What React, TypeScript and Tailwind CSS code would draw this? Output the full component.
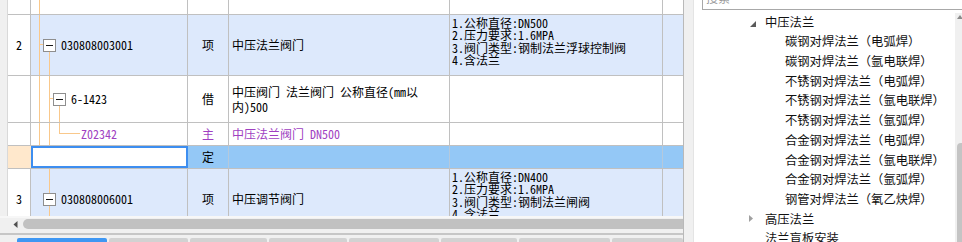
import React from "react";

function MinusBox() {
  return (
    <span className="relative z-10 flex h-[13px] w-[13px] shrink-0 items-center justify-center border border-[#8e8e8e] bg-white">
      <span className="h-px w-[7px] bg-[#1a1a1a]" />
    </span>
  );
}

export default function App() {
  return (
    <div className="flex h-[242px] w-[962px] overflow-hidden bg-white font-['Noto_Sans_CJK_SC',sans-serif] text-[12px] leading-none text-black">
      {/* LEFT: grid */}
      <div className="flex w-[683px] shrink-0 flex-col bg-[#f0f0f0]">
        <div className="flex h-[216px] overflow-hidden [font-feature-settings:'hwid']">
          <div className="w-[8px] shrink-0 border-r border-[#d9d9d9] bg-[#f0f0f0]" />
          <div className="flex w-[675px] flex-col bg-white">
            {/* row 0 (tail of previous) */}
            <div className="flex h-[15px] shrink-0 border-b border-[#c0c0c0]">
              <div className="w-[23px] border-r border-[#c0c0c0]" />
              <div className="relative w-[157px] border-r border-[#c0c0c0]">
                <span className="absolute bottom-0 left-[8px] top-0 w-px bg-[#f9c88b]" />
              </div>
              <div className="w-[41px] border-r border-[#c0c0c0]" />
              <div className="w-[221px] border-r border-[#c0c0c0]" />
              <div className="w-[213px] border-r border-[#c0c0c0]" />
              <div className="w-[20px]" />
            </div>

            {/* row 2 */}
            <div className="flex h-[61px] shrink-0 border-b border-[#c0c0c0] bg-[#dde9fc]">
              <div className="flex w-[23px] items-center justify-center border-r border-[#c0c0c0] bg-white">2</div>
              <div className="relative flex w-[157px] items-center gap-[5px] border-r border-[#c0c0c0] pl-[12px]">
                <span className="absolute bottom-0 left-[8px] top-0 w-px bg-[#f9c88b]" />
                <span className="absolute left-[8px] top-[29px] h-px w-[4px] bg-[#f9c88b]" />
                <span className="absolute bottom-0 left-[18px] top-[37px] w-px bg-[#f9c88b]" />
                <MinusBox />
                <span>030808003001</span>
              </div>
              <div className="flex w-[41px] items-center justify-center border-r border-[#c0c0c0]">项</div>
              <div className="flex w-[221px] items-center border-r border-[#c0c0c0] pl-[3px]">中压法兰阀门</div>
              <div className="w-[213px] border-r border-[#c0c0c0] pl-[2px] pt-[2px] leading-[12.3px]">
                <div>1.公称直径:DN500</div>
                <div>2.压力要求:1.6MPA</div>
                <div>3.阀门类型:钢制法兰浮球控制阀</div>
                <div>4.含法兰</div>
              </div>
              <div className="w-[20px]" />
            </div>

            {/* row 6-1423 */}
            <div className="flex h-[47px] shrink-0 border-b border-[#c0c0c0]">
              <div className="w-[23px] border-r border-[#c0c0c0]" />
              <div className="relative flex w-[157px] items-center gap-[5px] border-r border-[#c0c0c0] pl-[22px]">
                <span className="absolute bottom-0 left-[8px] top-0 w-px bg-[#f9c88b]" />
                <span className="absolute bottom-0 left-[18px] top-0 w-px bg-[#f9c88b]" />
                <span className="absolute left-[18px] top-[22px] h-px w-[4px] bg-[#f9c88b]" />
                <span className="absolute bottom-0 left-[28px] top-[29px] w-px bg-[#f9c88b]" />
                <MinusBox />
                <span>6-1423</span>
              </div>
              <div className="flex w-[41px] items-center justify-center border-r border-[#c0c0c0]">借</div>
              <div className="flex w-[221px] items-center border-r border-[#c0c0c0] pl-[3px] leading-[15px]">
                <div>
                  中压阀门 法兰阀门 公称直径(mm以
                  <br />
                  内)500
                </div>
              </div>
              <div className="w-[213px] border-r border-[#c0c0c0]" />
              <div className="w-[20px]" />
            </div>

            {/* row Z02342 */}
            <div className="flex h-[23px] shrink-0 border-b border-[#c0c0c0] text-[#a03fc2]">
              <div className="w-[23px] border-r border-[#c0c0c0]" />
              <div className="relative flex w-[157px] items-center border-r border-[#c0c0c0] pl-[50px]">
                <span className="absolute bottom-0 left-[8px] top-0 w-px bg-[#f9c88b]" />
                <span className="absolute bottom-0 left-[18px] top-0 w-px bg-[#f9c88b]" />
                <span className="absolute left-[28px] top-0 h-[11px] w-px bg-[#f9c88b]" />
                <span className="absolute left-[28px] top-[10px] h-px w-[21px] bg-[#f9c88b]" />
                <span>Z02342</span>
              </div>
              <div className="flex w-[41px] items-center justify-center border-r border-[#c0c0c0]">主</div>
              <div className="flex w-[221px] items-center border-r border-[#c0c0c0] pl-[3px]">中压法兰阀门 DN500</div>
              <div className="w-[213px] border-r border-[#c0c0c0]" />
              <div className="w-[20px]" />
            </div>

            {/* row 定 (editing) */}
            <div className="flex h-[23px] shrink-0 border-b border-[#c0c0c0] bg-[#94c8f6]">
              <div className="w-[23px] bg-[#ffe8cc]" />
              <div className="w-[157px] border-2 border-[#3d8ef0] bg-white" />
              <div className="flex w-[41px] items-center justify-center border-r border-[#b5c9dc]">定</div>
              <div className="w-[221px] border-r border-[#b5c9dc]" />
              <div className="w-[213px] border-r border-[#b5c9dc]" />
              <div className="w-[20px]" />
            </div>

            {/* row 3 */}
            <div className="flex h-[61px] shrink-0 border-b border-[#c0c0c0] bg-[#dde9fc]">
              <div className="flex w-[23px] items-center justify-center border-r border-[#c0c0c0] bg-white">3</div>
              <div className="relative flex w-[157px] items-center gap-[5px] border-r border-[#c0c0c0] pl-[12px]">
                <span className="absolute left-[18px] top-0 h-[24px] w-px bg-[#f9c88b]" />
                <span className="absolute bottom-0 left-[18px] top-[37px] w-px bg-[#f9c88b]" />
                <MinusBox />
                <span>030808006001</span>
              </div>
              <div className="flex w-[41px] items-center justify-center border-r border-[#c0c0c0]">项</div>
              <div className="flex w-[221px] items-center border-r border-[#c0c0c0] pl-[3px]">中压调节阀门</div>
              <div className="w-[213px] border-r border-[#c0c0c0] pl-[2px] pt-[2px] leading-[12.3px]">
                <div>1.公称直径:DN400</div>
                <div>2.压力要求:1.6MPA</div>
                <div>3.阀门类型:钢制法兰闸阀</div>
                <div>4.含法兰</div>
              </div>
              <div className="w-[20px]" />
            </div>
          </div>
        </div>

        {/* bottom: scrollbar + tabs */}
        <div className="h-[2px] shrink-0 bg-[#f7f7f7]" />
        <div className="flex h-[12px] shrink-0 items-center bg-[#f0f0f0] pl-[13px]">
          <svg width="5" height="7" viewBox="0 0 5 7" className="shrink-0">
            <polygon points="4.5,0 0.5,3.5 4.5,7" fill="#505050" />
          </svg>
          <div className="ml-[5px] h-[10px] flex-1 rounded-l-full bg-[#c1c1c1]" />
        </div>
        <div className="h-[3px] shrink-0 bg-[#f0f0f0]" />
        <div className="h-[2px] shrink-0 bg-[#c6c6c6]" />
        <div className="h-[3px] shrink-0 bg-[#f0f0f0]" />
        <div className="flex h-[4px] shrink-0 gap-[2px] bg-[#f0f0f0] pl-[17px]">
          <div className="w-[90px] rounded-t-[2px] bg-[#3f97f3]" />
          <div className="w-[79px] rounded-t-[2px] bg-[#d2d2d2]" />
          <div className="w-[77px] rounded-t-[2px] bg-[#d2d2d2]" />
          <div className="w-[78px] rounded-t-[2px] bg-[#d2d2d2]" />
          <div className="w-[90px] rounded-t-[2px] bg-[#d2d2d2]" />
          <div className="w-[76px] rounded-t-[2px] bg-[#d2d2d2]" />
          <div className="w-[91px] rounded-t-[2px] bg-[#d2d2d2]" />
          <div className="flex-1 rounded-t-[2px] bg-[#d2d2d2]" />
        </div>
      </div>

      {/* splitter */}
      <div className="w-[11px] shrink-0 border-l border-r border-l-[#b9b9b9] border-r-[#e4e4e4] bg-[#f0f0f0]" />

      {/* RIGHT: tree panel */}
      <div className="flex min-w-0 flex-1 flex-col overflow-hidden bg-white">
        <div className="ml-[8px] mt-[-15px] flex h-[25px] w-[300px] shrink-0 items-center border border-[#a8a8a8] pl-[3px] text-[#9a9a9a]">
          搜索
        </div>
        <div className="mt-[2px] flex min-h-0 flex-1">
          <div className="flex flex-1 flex-col text-[12.3px] leading-none text-[#111]">
            <div className="flex h-[19.7px] shrink-0 items-center pl-[56px]">
              <svg width="6" height="6" viewBox="0 0 6 6" className="mt-[4px] shrink-0">
                <polygon points="0,6 6,0 6,6" fill="#5a5a5a" />
              </svg>
              <span className="ml-[9px]">中压法兰</span>
            </div>
            <div className="flex h-[19.7px] shrink-0 items-center pl-[91px]">碳钢对焊法兰（电弧焊）</div>
            <div className="flex h-[19.7px] shrink-0 items-center pl-[91px]">碳钢对焊法兰（氩电联焊）</div>
            <div className="flex h-[19.7px] shrink-0 items-center pl-[91px]">不锈钢对焊法兰（电弧焊）</div>
            <div className="flex h-[19.7px] shrink-0 items-center pl-[91px]">不锈钢对焊法兰（氩电联焊）</div>
            <div className="flex h-[19.7px] shrink-0 items-center pl-[91px]">不锈钢对焊法兰（氩弧焊）</div>
            <div className="flex h-[19.7px] shrink-0 items-center pl-[91px]">合金钢对焊法兰（电弧焊）</div>
            <div className="flex h-[19.7px] shrink-0 items-center pl-[91px]">合金钢对焊法兰（氩电联焊）</div>
            <div className="flex h-[19.7px] shrink-0 items-center pl-[91px]">合金钢对焊法兰（氩弧焊）</div>
            <div className="flex h-[19.7px] shrink-0 items-center pl-[91px]">钢管对焊法兰（氧乙炔焊）</div>
            <div className="flex h-[19.7px] shrink-0 items-center pl-[55px]">
              <svg width="4" height="7" viewBox="0 0 4 7" className="shrink-0">
                <polygon points="0,0 4,3.5 0,7" fill="#a0a0a0" />
              </svg>
              <span className="ml-[12px]">高压法兰</span>
            </div>
            <div className="flex h-[19.7px] shrink-0 items-center pl-[71px]">法兰盲板安装</div>
          </div>
          <div className="mt-[1px] flex w-[7px] shrink-0 flex-col bg-[#f0f0f0]">
            <svg width="7" height="8" viewBox="0 0 7 8" className="shrink-0">
              <polygon points="2,6 5,2 8,6" fill="#8a8a8a" />
            </svg>
            <div className="ml-[2px] mt-[122px] flex-1 rounded-tl-[4px] bg-[#c4c4c4]" />
          </div>
        </div>
      </div>
    </div>
  );
}
